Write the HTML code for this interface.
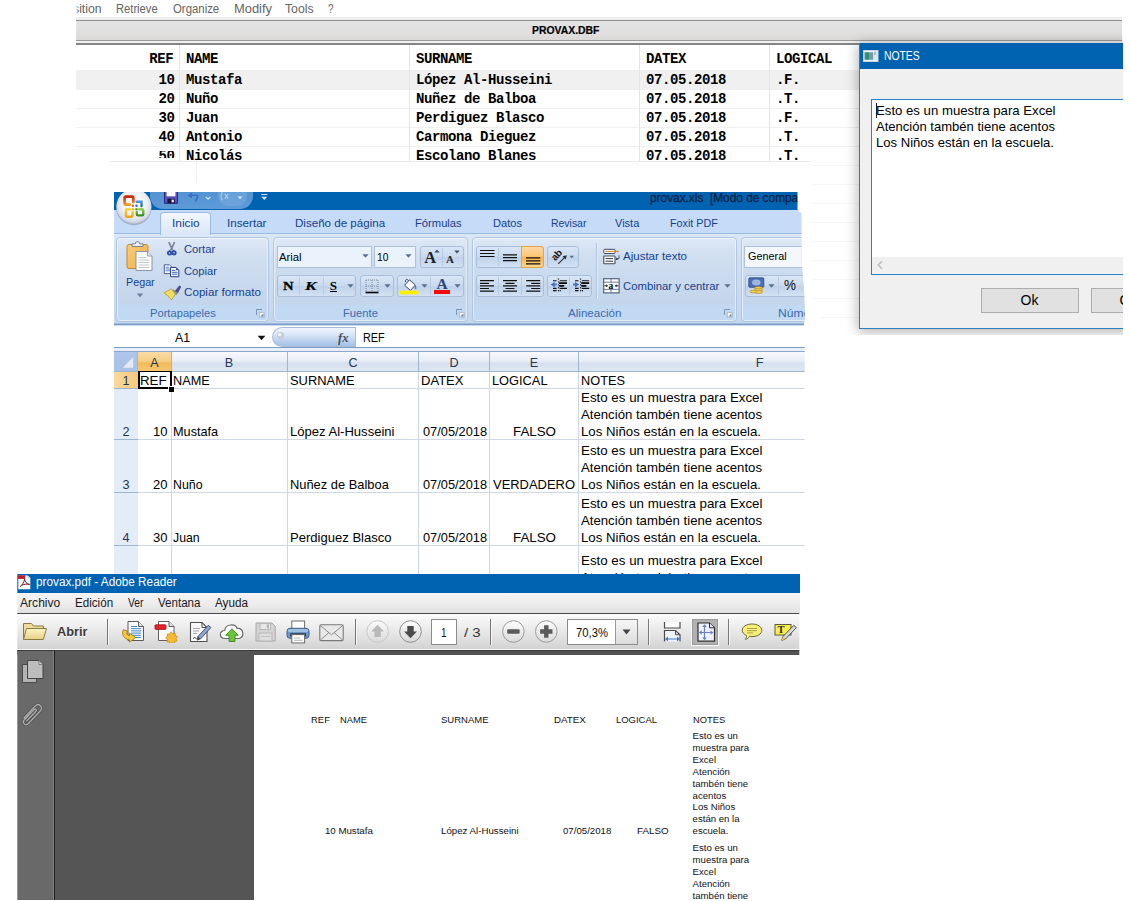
<!DOCTYPE html>
<html lang="es"><head>
<meta charset="utf-8">
<title>provax</title>
<style>
html,body{margin:0;padding:0;background:#fff;}
html{width:1130px;height:901px;overflow:hidden;}
body{position:relative;width:1130px;height:901px;overflow:hidden;font-family:"Liberation Sans",sans-serif;color:#000;}
.a{position:absolute;}
.t{position:absolute;white-space:nowrap;line-height:1;}
.r{text-align:right;}
.c{text-align:center;}
/* DBF browse window */
.mn{font-size:12px;color:#646464;}
.dbf{font-family:"Liberation Mono",monospace;font-weight:bold;font-size:14px;letter-spacing:-0.4px;color:#000;}
.hl{position:absolute;height:1px;}
.vl{position:absolute;width:1px;}
/* Excel */
.rb{font-size:10.900px;color:#15428b;}
.gl{font-size:10.900px;color:#3e6aaa;}
.xl{font-size:13.33px;color:#000;}
.xh{font-size:12.600px;color:#27374f;}
.btn{position:absolute;box-sizing:border-box;border:1px solid #a9bfd9;border-radius:3px;background:linear-gradient(#d9e6f6,#c9daee 50%,#bfd2ea 51%,#d3e1f3);}
.grp{position:absolute;box-sizing:border-box;border:1px solid #b1c6e0;border-radius:4px;background:linear-gradient(#dfe9f6,#d0def0 22%,#c4d6ec 78%,#c4d6ec);box-shadow:inset 0 0 0 1px rgba(255,255,255,.55);}
.grpl{position:absolute;left:1px;right:1px;bottom:1px;height:15px;background:#c2d9f4;border-radius:0 0 3px 3px;}
/* Reader */
.rm{font-size:12px;color:#1a1a1a;}
.pdf{font-size:9.6px;color:#111;}
</style>
</head>
<body>

<!-- ================= DBF BROWSE WINDOW (background app) ================= -->
<div id="dbf">
  <span class="t mn" style="left: 72.9px; transform-origin: left center; transform: scaleX(1.0209); line-height: 1; top: 2.64px;">sition</span>
  <span class="t mn" style="left: 116.3px; transform-origin: left center; transform: scaleX(0.9309); line-height: 1; top: 2.64px;">Retrieve</span>
  <span class="t mn" style="left: 172.7px; transform-origin: left center; transform: scaleX(0.9486); line-height: 1; top: 2.64px;">Organize</span>
  <span class="t mn" style="left: 233.5px; transform-origin: left center; transform: scaleX(1.0752); line-height: 1; top: 2.64px;">Modify</span>
  <span class="t mn" style="left: 285px; transform-origin: left center; transform: scaleX(1.0173); line-height: 1; top: 2.64px;">Tools</span>
  <span class="t mn" style="left: 327.5px; transform-origin: left center; transform: scaleX(0.8224); line-height: 1; top: 2.64px;">?</span>
  <!-- left fade over clipped menu text -->
  <div class="a" style="left:64px;top:0;width:14px;height:18px;background:linear-gradient(90deg,#fff 86%,rgba(255,255,255,0))"></div>

  <!-- caption bar -->
  <div class="a" style="left:76px;top:17px;width:1046px;height:3px;background:#efefef"></div>
  <div class="a" style="left:76px;top:20px;width:1046px;height:1px;background:#8f8f8f"></div>
  <div class="a" style="left:76px;top:21px;width:1046px;height:19px;background:linear-gradient(#e3e3e3,#e0e0e0 60%,#dcd9d8)"></div>
  <div class="a" style="left:76px;top:40px;width:1046px;height:1px;background:#9a9a9a"></div>
  <div class="a" style="left:76px;top:41px;width:1046px;height:2px;background:#f0f0f0"></div>
  <div class="a" style="left:76px;top:43.400px;width:1046px;height:1.400px;background:#858585"></div>
  <span class="t" style="left: 532.2px; font-size: 11.5px; font-weight: bold; color: rgb(0, 0, 0); -webkit-text-stroke: 0.2px rgb(0, 0, 0); transform-origin: left center; transform: scaleX(0.9041); line-height: 1; top: 25.47px;">PROVAX.DBF</span>

  <!-- selected row -->
  <div class="a" style="left:76px;top:70px;width:790px;height:19px;background:#f0f0f0"></div>
  <!-- row separators -->
  <div class="hl" style="left:76px;top:89px;width:790px;background:#f0f0f0"></div>
  <div class="hl" style="left:76px;top:108px;width:790px;background:#f0f0f0"></div>
  <div class="hl" style="left:76px;top:127px;width:790px;background:#f0f0f0"></div>
  <div class="hl" style="left:76px;top:146px;width:790px;background:#f0f0f0"></div>
  <div class="hl" style="left:812px;top:165px;width:50px;background:#f6f6f6"></div>
  <div class="hl" style="left:812px;top:184px;width:50px;background:#f6f6f6"></div>
  <div class="hl" style="left:812px;top:203px;width:50px;background:#f6f6f6"></div>
  <div class="hl" style="left:812px;top:222px;width:50px;background:#f6f6f6"></div>
  <div class="hl" style="left:812px;top:241px;width:50px;background:#f6f6f6"></div>
  <div class="hl" style="left:812px;top:260px;width:50px;background:#f6f6f6"></div>
  <div class="hl" style="left:812px;top:279px;width:50px;background:#f6f6f6"></div>
  <div class="hl" style="left:812px;top:298px;width:50px;background:#f6f6f6"></div>
  <div class="hl" style="left:820px;top:317px;width:42px;background:#f6f6f6"></div>
  <!-- column separators -->
  <div class="vl" style="left:179px;top:45px;height:117px;background:#e5e5e5"></div>
  <div class="vl" style="left:409px;top:45px;height:117px;background:#e5e5e5"></div>
  <div class="vl" style="left:639px;top:45px;height:117px;background:#e5e5e5"></div>
  <div class="vl" style="left:769px;top:45px;height:117px;background:#e5e5e5"></div>

  <!-- header -->
  <span class="t dbf" style="left: 149.3px; line-height: 1; top: 51.57px;">REF</span>
  <span class="t dbf" style="left: 186px; line-height: 1; top: 51.57px;">NAME</span>
  <span class="t dbf" style="left: 416px; line-height: 1; top: 51.57px;">SURNAME</span>
  <span class="t dbf" style="left: 646px; line-height: 1; top: 51.57px;">DATEX</span>
  <span class="t dbf" style="left: 776px; line-height: 1; top: 51.57px;">LOGICAL</span>
  <!-- rows -->
  <span class="t dbf" style="left: 158.5px; line-height: 1; top: 73.27px;">10</span>
  <span class="t dbf" style="left: 186px; line-height: 1; top: 73.27px;">Mustafa</span>
  <span class="t dbf" style="left: 416px; line-height: 1; top: 73.27px;">López Al-Husseini</span>
  <span class="t dbf" style="left: 646px; line-height: 1; top: 73.27px;">07.05.2018</span>
  <span class="t dbf" style="left: 776px; line-height: 1; top: 73.27px;">.F.</span>

  <span class="t dbf" style="left: 158.5px; line-height: 1; top: 92.17px;">20</span>
  <span class="t dbf" style="left: 186px; line-height: 1; top: 92.17px;">Nuño</span>
  <span class="t dbf" style="left: 416px; line-height: 1; top: 92.17px;">Nuñez de Balboa</span>
  <span class="t dbf" style="left: 646px; line-height: 1; top: 92.17px;">07.05.2018</span>
  <span class="t dbf" style="left: 776px; line-height: 1; top: 92.17px;">.T.</span>

  <span class="t dbf" style="left: 158.5px; line-height: 1; top: 111.17px;">30</span>
  <span class="t dbf" style="left: 186px; line-height: 1; top: 111.17px;">Juan</span>
  <span class="t dbf" style="left: 416px; line-height: 1; top: 111.17px;">Perdiguez Blasco</span>
  <span class="t dbf" style="left: 646px; line-height: 1; top: 111.17px;">07.05.2018</span>
  <span class="t dbf" style="left: 776px; line-height: 1; top: 111.17px;">.F.</span>

  <span class="t dbf" style="left: 158.5px; line-height: 1; top: 130.07px;">40</span>
  <span class="t dbf" style="left: 186px; line-height: 1; top: 130.07px;">Antonio</span>
  <span class="t dbf" style="left: 416px; line-height: 1; top: 130.07px;">Carmona Dieguez</span>
  <span class="t dbf" style="left: 646px; line-height: 1; top: 130.07px;">07.05.2018</span>
  <span class="t dbf" style="left: 776px; line-height: 1; top: 130.07px;">.T.</span>

  <span class="t dbf" style="left: 158.5px; line-height: 1; top: 149.07px;">50</span>
  <span class="t dbf" style="left: 186px; line-height: 1; top: 149.07px;">Nicolás</span>
  <span class="t dbf" style="left: 416px; line-height: 1; top: 149.07px;">Escolano Blanes</span>
  <span class="t dbf" style="left: 646px; line-height: 1; top: 149.07px;">07.05.2018</span>
  <span class="t dbf" style="left: 776px; line-height: 1; top: 149.07px;">.T.</span>
  <!-- ragged white overlays that clip the last row -->
  <div class="a" style="left:76px;top:147px;width:103px;height:4.300px;background:#fff"></div>
  <div class="a" style="left:76px;top:157.600px;width:103px;height:8px;background:#fff"></div>
  <div class="a" style="left:76px;top:161.500px;width:735px;height:8px;background:#fff"></div>
  <div class="hl" style="left:110px;top:161px;width:701px;background:#ececec"></div>
  <div class="vl" style="left:196px;top:162px;height:21px;background:#f1f1f1"></div>
</div>

<!-- ================= EXCEL 2007 ================= -->
<div id="xl" class="a" style="left:0;top:0;width:1130px;height:901px;clip-path:polygon(114px 192px,797.5px 192px,797.5px 210.500px,801.500px 213px,801.500px 262px,803.500px 285px,804.700px 302px,804.700px 574px,114px 574px)">
  <!-- title bar -->
  <div class="a" style="left:114px;top:192px;width:690px;height:19px;background:#0063b1"></div>
  <!-- quick access toolbar pill -->
  <div class="a" style="left:150px;top:184px;width:103px;height:24.500px;border-radius:0 0 13px 13px;background:linear-gradient(#4d8fd0,#5e9bd8)"></div>
  <div class="a" style="left:217.500px;top:187px;width:29px;height:19px;border-radius:0 0 10px 10px;background:#72a6dc;opacity:.7"></div>
  <!-- tab row -->
  <div class="a" style="left:114px;top:210px;width:690px;height:24px;background:#c6dbf7"></div>
  <div class="a" style="left:114px;top:233px;width:690px;height:1px;background:#9bbce0"></div>
  <!-- ribbon body -->
  <div class="a" style="left:114px;top:234px;width:690px;height:89px;background:linear-gradient(#dbe7f7,#cfdff3 30%,#c3d7ef)"></div>
  <div class="a" style="left:114px;top:323px;width:690px;height:1px;background:#9db8da"></div>
  <div class="a" style="left:114px;top:324px;width:690px;height:1.500px;background:#7f9dc4"></div>
  <div class="a" style="left:114px;top:325px;width:690px;height:1px;background:#c9dbf0"></div>
  <!-- active tab -->
  <div class="a" style="left:160px;top:212px;width:51px;height:23px;box-sizing:border-box;border:1px solid #9bbce0;border-bottom:none;border-radius:4px 4px 0 0;background:linear-gradient(#f4f8fd,#e3edfa 60%,#dbe7f7)"></div>
  <span class="t rb" style="left: 171.7px; transform-origin: left center; transform: scaleX(1.0889); line-height: 1; top: 217.57px;">Inicio</span>
  <span class="t rb" style="left: 226.8px; transform-origin: left center; transform: scaleX(1.0698); line-height: 1; top: 217.57px;">Insertar</span>
  <span class="t rb" style="left: 295px; transform-origin: left center; transform: scaleX(1.0627); line-height: 1; top: 217.57px;">Diseño de página</span>
  <span class="t rb" style="left: 414.7px; transform-origin: left center; transform: scaleX(1.0288); line-height: 1; top: 217.57px;">Fórmulas</span>
  <span class="t rb" style="left: 492.5px; transform-origin: left center; transform: scaleX(1.0192); line-height: 1; top: 217.57px;">Datos</span>
  <span class="t rb" style="left: 551.4px; transform-origin: left center; transform: scaleX(0.9588); line-height: 1; top: 217.57px;">Revisar</span>
  <span class="t rb" style="left: 615.1px; transform-origin: left center; transform: scaleX(1.0118); line-height: 1; top: 217.57px;">Vista</span>
  <span class="t rb" style="left: 670.3px; transform-origin: left center; transform: scaleX(0.9851); line-height: 1; top: 217.57px;">Foxit PDF</span>
  <span class="t" style="left: 649.5px; font-size: 13px; color: rgb(10, 29, 64); -webkit-text-stroke: 0.25px rgb(10, 29, 64); transform-origin: left center; transform: scaleX(0.9115); line-height: 1; top: 191.2px;">provax.xls &nbsp;[Modo de compat</span>

  <!-- office orb -->
  <svg class="a" style="left:114px;top:188px" width="40" height="40" viewBox="0 0 40 40">
    <defs>
      <radialGradient id="orb" cx="50%" cy="42%" r="60%"><stop offset="0" stop-color="#ffffff"></stop><stop offset=".6" stop-color="#eef1f6"></stop><stop offset=".86" stop-color="#d3dae6"></stop><stop offset="1" stop-color="#a3aec0"></stop></radialGradient>
      <linearGradient id="o1" x1="0" y1="0" x2="0" y2="1"><stop offset="0" stop-color="#c8260f"></stop><stop offset="1" stop-color="#f39a1d"></stop></linearGradient>
      <linearGradient id="o2" x1="0" y1="0" x2="0" y2="1"><stop offset="0" stop-color="#4a9be0"></stop><stop offset="1" stop-color="#2a5fae"></stop></linearGradient>
      <linearGradient id="o3" x1="0" y1="0" x2="0" y2="1"><stop offset="0" stop-color="#fcd535"></stop><stop offset="1" stop-color="#f0a013"></stop></linearGradient>
      <linearGradient id="o4" x1="0" y1="0" x2="0" y2="1"><stop offset="0" stop-color="#98cf45"></stop><stop offset="1" stop-color="#3a8f24"></stop></linearGradient>
    </defs>
    <circle cx="19.900" cy="19.300" r="17.900" fill="#6f7f98" opacity=".5"></circle>
    <circle cx="19.900" cy="18.600" r="17.500" fill="url(#orb)"></circle>
    <path d="M15.800 16.600H11.900a1.300 1.300 0 0 1-1.300-1.300V9.900a1.300 1.300 0 0 1 1.300-1.300h6.100a1.300 1.300 0 0 1 1.300 1.300v4.200" fill="none" stroke="url(#o1)" stroke-width="2.700" stroke-linecap="round"></path>
    <path d="M22.600 13.800h4.900v4.300" fill="none" stroke="url(#o2)" stroke-width="2.400" stroke-linecap="round"></path>
    <circle cx="22.500" cy="17.700" r="1.250" fill="#2f6cbd"></circle>
    <circle cx="18.800" cy="17.700" r="1.250" fill="#e8641b"></circle>
    <path d="M15.800 21.200h-2.700a1.200 1.200 0 0 0-1.200 1.200v5.200a1.200 1.200 0 0 0 1.200 1.200h4.300a1.200 1.200 0 0 0 1.200-1.200V24.200" fill="none" stroke="url(#o3)" stroke-width="2.400" stroke-linecap="round"></path>
    <circle cx="18.800" cy="21.300" r="1.250" fill="#f6bb2c"></circle>
    <path d="M25.300 21.200h2.800a1.200 1.200 0 0 1 1.200 1.200v3.800a1.200 1.200 0 0 1-1.200 1.200h-4.100a1.200 1.200 0 0 1-1.200-1.200v-2.200" fill="none" stroke="url(#o4)" stroke-width="2.400" stroke-linecap="round"></path>
    <circle cx="22.500" cy="21.300" r="1.250" fill="#58a82e"></circle>
  </svg>

  <!-- QAT icons -->
  <svg class="a" style="left:160px;top:190px" width="112" height="20" viewBox="0 0 112 20">
    <path d="M4.500 0h13v13.300h-13z" fill="#5c50c0" stroke="#2c2878" stroke-width="1"></path>
    <rect x="6.600" y="0" width="8.800" height="6.300" fill="#fbfbff"></rect>
    <rect x="7.400" y="8.600" width="7.400" height="4.700" fill="#17153c"></rect><rect x="11.600" y="9.600" width="2.200" height="2.700" fill="#f4f4f4"></rect>
    <path d="M30.500 5.300h5.800c1.600 0 1.600 1 1 2.600l-2 3.800" fill="none" stroke="#3d6bc6" stroke-width="1.600"></path>
    <path d="M27.600 5.400l4.400-2.800v5.600z" fill="#3d6bc6"></path>
    <path d="M45.800 6.800l2.300 2.300 2.300-2.300" fill="none" stroke="#d5e4f5" stroke-width="1.200"></path>
    <path d="M64.800 3.800l3.400 4.800M68.200 3.800l-3.400 4.800" stroke="#a9c8ea" stroke-width="1.300"></path>
    <path d="M62.300 2.400c-1.600 2.400-1.600 5.600 0 8" fill="none" stroke="#a9c8ea" stroke-width="1.200"></path>
    <path d="M77.600 6.400h4.800l-2.400 2.800z" fill="#e4eefa"></path>
    <path d="M101.300 4.500h6" stroke="#d7e6f6" stroke-width="1.200"></path><path d="M101.300 6.800h6l-3 3.200z" fill="#d7e6f6"></path>
  </svg>

  <!-- ===== group: Portapapeles ===== -->
  <div class="grp" style="left:116px;top:236.5px;width:152.5px;height:85px"><div class="grpl"></div></div>
  <!-- paste icon -->
  <svg class="a" style="left:125px;top:240px" width="30" height="33" viewBox="0 0 30 33">
    <defs><linearGradient id="pb" x1="0" y1="0" x2="1" y2="1"><stop offset="0" stop-color="#fbcf7a"></stop><stop offset="1" stop-color="#f2ab45"></stop></linearGradient></defs>
    <rect x="2" y="4.5" width="21" height="24" rx="2" fill="url(#pb)" stroke="#b98a3b" stroke-width="1"></rect>
    <path d="M7 6.5h11v-2.6h-3.2a2.3 2.3 0 0 0-4.6 0H7z" fill="#eef1f5" stroke="#6f7785" stroke-width=".9"></path>
    <path d="M11 11.5h11.5l4.5 4.5v14.5H11z" fill="#fdfdfd" stroke="#8c95a3" stroke-width="1"></path>
    <path d="M22.5 11.5v4.5H27" fill="#e6e9ee" stroke="#8c95a3" stroke-width=".9"></path>
    <path d="M13.5 17.5h8M13.5 20h11M13.5 22.5h11M13.5 25h11M13.5 27.5h11" stroke="#c3c8d0" stroke-width="1"></path>
  </svg>
  <span class="t rb" style="left: 125.5px; transform-origin: left center; transform: scaleX(0.9875); line-height: 1; top: 277.47px;">Pegar</span>
  <svg class="a" style="left:136px;top:293px" width="8" height="5" viewBox="0 0 8 5"><path d="M.8.6h6.4L4 4.2z" fill="#6f7f99"></path></svg>
  <!-- cut -->
  <svg class="a" style="left:164px;top:241px" width="16" height="16" viewBox="0 0 16 16">
    <path d="M4.800 1.200l4 8.200M10.600 1.200L6.600 9.400" stroke="#7d8499" stroke-width="1.700" fill="none"></path>
    <circle cx="5.500" cy="12" r="1.700" fill="none" stroke="#2d4ca6" stroke-width="1.800"></circle>
    <circle cx="10" cy="11.800" r="1.700" fill="none" stroke="#2d4ca6" stroke-width="1.800"></circle>
    <path d="M6.200 9.600L5.400 10.400M9 9.600l.800.700" stroke="#2d4ca6" stroke-width="1.700"></path>
  </svg>
  <span class="t rb" style="left: 183.8px; transform-origin: left center; transform: scaleX(1.0309); line-height: 1; top: 243.77px;">Cortar</span>
  <!-- copy -->
  <svg class="a" style="left:163px;top:264px" width="18" height="14" viewBox="0 0 18 14">
    <path d="M1.300 .800h5.200l2 2v6.800H1.300z" fill="#fdfdff" stroke="#3a4c86" stroke-width=".900"></path>
    <path d="M2.600 3.200h3.400M2.600 5h4.600M2.600 6.800h4.600" stroke="#4a6cc0" stroke-width=".900"></path>
    <path d="M7.600 3.400h5.400l2.800 2.800v6.500H7.600z" fill="#fdfdff" stroke="#263a78" stroke-width="1"></path>
    <path d="M13 3.400v2.800h2.800z" fill="#3556a6"></path>
    <path d="M9 6.400h3.400M9 8.300h5.400M9 10.200h5.400" stroke="#3f63bb" stroke-width="1"></path>
  </svg>
  <span class="t rb" style="left: 183.8px; transform-origin: left center; transform: scaleX(1.0251); line-height: 1; top: 265.77px;">Copiar</span>
  <!-- format painter -->
  <svg class="a" style="left:162px;top:285px" width="20" height="16" viewBox="0 0 20 16">
    <path d="M13 6.400l3.800-5c.900-.900 2.200 0 1.700 1.100l-3 5.600z" fill="#4d4aa0" stroke="#34326e" stroke-width=".600"></path>
    <path d="M11 4.800l4.600 3-1.400 2-4.400-3.200z" fill="#9c9db4" stroke="#5c5d78" stroke-width=".500"></path>
    <path d="M2 7.800l7.600-4 3.600 5.300-3.400 5.500c-1.600-.600-2.600-1.700-3.200-3.200z" fill="#f2dd5c" stroke="#a89428" stroke-width=".700"></path>
    <path d="M2 7.800l4.600 3.600" stroke="#c9b23a" stroke-width=".800"></path>
  </svg>
  <span class="t rb" style="left: 183.8px; transform-origin: left center; transform: scaleX(1.069); line-height: 1; top: 287.47px;">Copiar formato</span>
  <span class="t gl" style="left: 149.5px; transform-origin: left center; transform: scaleX(1.0251); line-height: 1; top: 308.37px;">Portapapeles</span>
  <svg class="a" style="left:255.5px;top:308.5px" width="9" height="9" viewBox="0 0 9 9"><path d="M.5 6V.5H6" fill="none" stroke="#7f93b3" stroke-width="1"></path><path d="M3.4 3.4h4.8v4.8H3.4z" fill="#fff" stroke="#8a9bb6" stroke-width=".6"></path><path d="M4.6 7.4l2.800-2.800v2.800z" fill="#5f7394"></path></svg>

  <!-- ===== group: Fuente ===== -->
  <div class="grp" style="left:272.5px;top:236.5px;width:195.5px;height:85px"><div class="grpl"></div></div>
  <div class="a" style="left:276.5px;top:246px;width:95.5px;height:21.500px;box-sizing:border-box;border:1px solid #abc1de;background:#eaf2fb"></div>
  <div class="a" style="left:373.5px;top:246px;width:42px;height:21.500px;box-sizing:border-box;border:1px solid #abc1de;background:#eaf2fb"></div>
  <span class="t" style="left: 279px; font-size: 10.9px; color: rgb(0, 0, 0); transform-origin: left center; transform: scaleX(1.0368); line-height: 1; top: 251.57px;">Arial</span>
  <span class="t" style="left: 376.5px; font-size: 10.9px; color: rgb(0, 0, 0); transform-origin: left center; transform: scaleX(0.9402); line-height: 1; top: 251.57px;">10</span>
  <svg class="a" style="left:362px;top:254px" width="7" height="4" viewBox="0 0 7 4"><path d="M.4.3h6.200L3.500 3.700z" fill="#5a6f92"></path></svg>
  <svg class="a" style="left:405px;top:254px" width="7" height="4" viewBox="0 0 7 4"><path d="M.4.3h6.200L3.500 3.700z" fill="#5a6f92"></path></svg>
  <div class="btn" style="left:419.5px;top:246px;width:44.5px;height:21.500px"></div>
  <div class="vl" style="left:441.5px;top:247.5px;height:18.5px;background:#b7cbe3"></div>
  <span class="t" style="left: 424.3px; font-family: &quot;Liberation Serif&quot;, serif; font-weight: bold; font-size: 16.5px; color: rgb(34, 34, 34); line-height: 1; top: 249.58px;">A</span>
  <span class="t" style="left: 446px; font-family: &quot;Liberation Serif&quot;, serif; font-weight: bold; font-size: 11px; color: rgb(34, 34, 34); line-height: 1; top: 254.19px;">A</span>
  <svg class="a" style="left:434px;top:249px" width="6" height="4" viewBox="0 0 6 4"><path d="M.3 3.600h5.400L3 .4z" fill="#3d4f6e"></path></svg>
  <svg class="a" style="left:453.500px;top:250px" width="6" height="4" viewBox="0 0 6 4"><path d="M.3.4h5.400L3 3.600z" fill="#3d4f6e"></path></svg>

  <div class="btn" style="left:276.500px;top:275px;width:79px;height:21.500px"></div>
  <div class="vl" style="left:299px;top:276.500px;height:18.500px;background:#b7cbe3"></div>
  <div class="vl" style="left:322.500px;top:276.500px;height:18.500px;background:#b7cbe3"></div>
  <span class="t" style="left: 282.5px; font-family: &quot;Liberation Serif&quot;, serif; font-weight: bold; font-size: 13px; color: rgb(0, 0, 0); -webkit-text-stroke: 0.3px rgb(0, 0, 0); transform-origin: left center; transform: scaleX(1.1181); line-height: 1; top: 279.41px;">N</span>
  <span class="t" style="left: 305px; font-family: &quot;Liberation Serif&quot;, serif; font-weight: bold; font-style: italic; font-size: 13px; color: rgb(0, 0, 0); -webkit-text-stroke: 0.2px rgb(0, 0, 0); transform-origin: left center; transform: scaleX(1.3261); line-height: 1; top: 279.41px;">K</span>
  <span class="t" style="left: 329.7px; font-family: &quot;Liberation Serif&quot;, serif; font-weight: bold; font-size: 13px; color: rgb(0, 0, 0); line-height: 1; top: 279.11px;">S</span>
  <div class="hl" style="left:329.800px;top:290.700px;width:7.400px;background:#000"></div>
  <svg class="a" style="left:346.500px;top:284px" width="7" height="4" viewBox="0 0 7 4"><path d="M.4.3h6.200L3.500 3.700z" fill="#5a6f92"></path></svg>

  <div class="btn" style="left:359.500px;top:275px;width:34px;height:21.500px"></div>
  <svg class="a" style="left:364.500px;top:279px" width="14" height="15" viewBox="0 0 14 15">
    <path d="M1 1h12M1 7h12M1 1v12M7 1v12M13 1v12" stroke="#7b8798" stroke-width="1" stroke-dasharray="1 1"></path>
    <path d="M.5 13.500h13" stroke="#000" stroke-width="1.600"></path>
  </svg>
  <svg class="a" style="left:384px;top:284px" width="7" height="4" viewBox="0 0 7 4"><path d="M.4.3h6.200L3.500 3.700z" fill="#5a6f92"></path></svg>

  <div class="btn" style="left:397px;top:275px;width:67px;height:21.500px"></div>
  <div class="vl" style="left:430px;top:276.500px;height:18.500px;background:#b7cbe3"></div>
  <svg class="a" style="left:400px;top:277.500px" width="20" height="17" viewBox="0 0 20 17">
    <path d="M4.600 7.200l5-5.400 5.800 5.200-5 5.400z" fill="#f6f8fb" stroke="#3c4a66" stroke-width="1"></path>
    <path d="M8.600 2.800c-1.400-2.400-3.600-1.800-3 1.200" fill="none" stroke="#3c4a66" stroke-width="1"></path>
    <path d="M15.200 7.200c1.600 1.600 1.600 3.600.6 4-1 .3-1.600-1.400-.6-4z" fill="#5a78b8"></path>
    <rect x="0" y="12.600" width="18.400" height="3.800" fill="#ffee00"></rect>
  </svg>
  <svg class="a" style="left:421px;top:284px" width="7" height="4" viewBox="0 0 7 4"><path d="M.4.3h6.200L3.500 3.700z" fill="#5a6f92"></path></svg>
  <span class="t" style="left: 436.5px; font-family: &quot;Liberation Serif&quot;, serif; font-weight: bold; font-size: 15.5px; color: rgb(43, 70, 121); line-height: 1; top: 276.32px;">A</span>
  <div class="a" style="left:433.700px;top:290px;width:16.300px;height:3.800px;background:#f40a0a"></div>
  <svg class="a" style="left:454px;top:284px" width="7" height="4" viewBox="0 0 7 4"><path d="M.4.3h6.200L3.500 3.700z" fill="#5a6f92"></path></svg>
  <span class="t gl" style="left: 343.4px; transform-origin: left center; transform: scaleX(1.0323); line-height: 1; top: 308.37px;">Fuente</span>
  <svg class="a" style="left:455.5px;top:308.5px" width="9" height="9" viewBox="0 0 9 9"><path d="M.5 6V.5H6" fill="none" stroke="#7f93b3" stroke-width="1"></path><path d="M3.4 3.4h4.8v4.8H3.4z" fill="#fff" stroke="#8a9bb6" stroke-width=".6"></path><path d="M4.6 7.4l2.800-2.800v2.800z" fill="#5f7394"></path></svg>

  <!-- ===== group: Alineación ===== -->
  <div class="grp" style="left:471.500px;top:236.500px;width:265px;height:85px"><div class="grpl"></div></div>
  <div class="btn" style="left:475.500px;top:246px;width:68px;height:21.500px"></div>
  <div class="a" style="left:521px;top:246px;width:22.500px;height:21.500px;box-sizing:border-box;border:1px solid #e3a54a;border-radius:0 3px 3px 0;background:linear-gradient(#fbd7a0,#fdc877 45%,#fbb24a 55%,#fdd98f)"></div>
  <div class="vl" style="left:498px;top:247.500px;height:18.500px;background:#b7cbe3"></div>
  <svg class="a" style="left:478px;top:248px" width="64" height="18" viewBox="0 0 64 18">
    <path d="M2 2.500h14.500M2 5.500h14.500M2 8.500h14.500" stroke="#111" stroke-width="1.200"></path>
    <path d="M25 6.800h14M25 9.700h14M25 12.600h14" stroke="#111" stroke-width="1.200"></path>
    <path d="M48 9.900h14.300M48 12.900h14.300M48 15.900h14.300" stroke="#111" stroke-width="1.200"></path>
  </svg>
  <div class="btn" style="left:547px;top:246px;width:31.500px;height:21.500px"></div>
  <svg class="a" style="left:548px;top:247px" width="30" height="20" viewBox="0 0 30 20">
    <g transform="translate(7.300 14.300) rotate(-48)"><text x="0" y="0" font-family="Liberation Sans" font-size="9.800" font-weight="bold" fill="#111" letter-spacing="-.3">ab</text></g>
    <path d="M10.200 16.800l7.600-7.400" stroke="#2a2a2a" stroke-width="1.100"></path><path d="M18.800 8.300l-4.200 1 3 3.100z" fill="#2a2a2a"></path>
    <path d="M21.300 8.700h4.800l-2.400 2.600z" fill="#5a6f92"></path>
  </svg>

  <div class="btn" style="left:475.500px;top:275px;width:68px;height:21.500px"></div>
  <div class="vl" style="left:498px;top:276.500px;height:18.500px;background:#b7cbe3"></div>
  <div class="vl" style="left:520.500px;top:276.500px;height:18.500px;background:#b7cbe3"></div>
  <svg class="a" style="left:478px;top:277px" width="64" height="18" viewBox="0 0 64 18">
    <path d="M2 3.700h14M2 6.300h9M2 8.900h14M2 11.500h9M2 14.100h14" stroke="#111" stroke-width="1.200"></path>
    <path d="M25 3.700h14M27.500 6.300h9M25 8.900h14M27.500 11.500h9M25 14.100h14" stroke="#111" stroke-width="1.200"></path>
    <path d="M48.200 3.700h14M53.200 6.300h9M48.200 8.900h14M53.200 11.500h9M48.200 14.100h14" stroke="#111" stroke-width="1.200"></path>
  </svg>
  <div class="btn" style="left:547px;top:275px;width:45px;height:21.500px"></div>
  <div class="vl" style="left:569px;top:276.500px;height:18.500px;background:#b7cbe3"></div>
  <svg class="a" style="left:549px;top:277px" width="44" height="18" viewBox="0 0 44 18">
    <path d="M9.400 1.400v14.600" stroke="#111" stroke-width="1" stroke-dasharray="1.300 1.600"></path>
    <path d="M4 3.700h3.600M10.600 3.700h7.400M4 11.400h3.600M10.600 11.400h7.400M4 13.600h3.600M10.600 13.600h1.200" stroke="#111" stroke-width="1.100"></path>
    <path d="M10 6.100h8M10 8.900h5.200" stroke="#000" stroke-width="1.700"></path>
    <path d="M1.600 7.600l4.200-2.800v1.800h2v2h-2v1.800z" fill="#4f6fbf"></path>
    <path d="M31.600 1.400v14.600" stroke="#111" stroke-width="1" stroke-dasharray="1.300 1.600"></path>
    <path d="M26 3.700h3.600M32.800 3.700h7.400M26 11.400h3.600M32.800 11.400h7.400M26 13.600h3.600M32.800 13.600h1.200" stroke="#111" stroke-width="1.100"></path>
    <path d="M32.200 6.100h8M32.200 8.900h5.200" stroke="#000" stroke-width="1.700"></path>
    <path d="M30.200 7.600l-4.200-2.800v1.800h-2v2h2v1.800z" fill="#4f6fbf"></path>
  </svg>
  <div class="vl" style="left:596px;top:243px;height:55px;background:#aec3de"></div>
  <div class="vl" style="left:597px;top:243px;height:55px;background:#e6eef9"></div>
  <!-- wrap text -->
  <svg class="a" style="left:603px;top:248px" width="18" height="17" viewBox="0 0 18 17">
    <rect x=".800" y="1.300" width="11.200" height="4.200" rx=".800" fill="#fdfdfd" stroke="#3f4a5e" stroke-width="1"></rect>
    <path d="M2.400 3.400h13.800" stroke="#d8862a" stroke-width="1"></path>
    <rect x=".800" y="8" width="11.200" height="7.800" rx=".500" fill="#fdfdfd" stroke="#3f4a5e" stroke-width="1.100"></rect>
    <path d="M2.600 10.600h7.400M2.600 13.200h7.400" stroke="#2c3442" stroke-width="1"></path>
    <path d="M16 7.400v3.200h-2.600" fill="none" stroke="#3a4660" stroke-width=".900"></path><path d="M13 9.200v2.800h2.200z" fill="#3a4660"></path>
  </svg>
  <span class="t rb" style="left: 622.6px; transform-origin: left center; transform: scaleX(1.057); line-height: 1; top: 251.47px;">Ajustar texto</span>
  <!-- merge -->
  <svg class="a" style="left:603px;top:278px" width="17" height="16" viewBox="0 0 17 16">
    <rect x=".700" y=".700" width="15.400" height="14.200" fill="#fdfdfd" stroke="#4a5a78" stroke-width="1.100"></rect>
    <path d="M.700 4.200h15.400M.700 11.400h15.400M8 .700v3.500M8 11.400v3.500" stroke="#5c6d8c" stroke-width=".900"></path>
    <text x="5.600" y="10.500" font-family="Liberation Serif" font-weight="bold" font-size="9.500" fill="#000">a</text>
    <path d="M1.400 7.800h3M12.400 7.800h3" stroke="#222" stroke-width="1"></path><path d="M5 7.800l-1.800-1.500v3zM11.800 7.800l1.800-1.500v3z" fill="#222"></path>
  </svg>
  <span class="t rb" style="left: 622.5px; transform-origin: left center; transform: scaleX(1.0399); line-height: 1; top: 280.57px;">Combinar y centrar</span>
  <svg class="a" style="left:723.500px;top:284px" width="7" height="4" viewBox="0 0 7 4"><path d="M.4.3h6.200L3.500 3.700z" fill="#5a6f92"></path></svg>
  <span class="t gl" style="left: 568.3px; transform-origin: left center; transform: scaleX(1.0643); line-height: 1; top: 308.37px;">Alineación</span>
  <svg class="a" style="left:723.500px;top:308.500px" width="9" height="9" viewBox="0 0 9 9"><path d="M.5 6V.5H6" fill="none" stroke="#7f93b3" stroke-width="1"></path><path d="M3.4 3.4h4.8v4.8H3.4z" fill="#fff" stroke="#8a9bb6" stroke-width=".6"></path><path d="M4.6 7.4l2.800-2.800v2.800z" fill="#5f7394"></path></svg>

  <!-- ===== group: Número ===== -->
  <div class="grp" style="left:740.500px;top:236.500px;width:120px;height:85px"><div class="grpl"></div></div>
  <div class="a" style="left:744px;top:246px;width:100px;height:21.500px;box-sizing:border-box;border:1px solid #abc1de;background:#f4f8fd"></div>
  <span class="t" style="left: 747.7px; font-size: 10.9px; color: rgb(0, 0, 0); transform-origin: left center; transform: scaleX(0.9961); line-height: 1; top: 251.47px;">General</span>
  <div class="btn" style="left:744.500px;top:275px;width:100px;height:21.500px"></div>
  <div class="vl" style="left:777.500px;top:276.500px;height:18.500px;background:#b7cbe3"></div>
  <svg class="a" style="left:748px;top:277px" width="18" height="18" viewBox="0 0 18 18">
    <rect x=".800" y=".800" width="15" height="9.500" rx="1" fill="#4a6fb6" stroke="#2b4680" stroke-width=".800"></rect>
    <ellipse cx="8.300" cy="5.500" rx="4.300" ry="3" fill="#9fb6df"></ellipse>
    <ellipse cx="10.500" cy="11" rx="4" ry="1.500" fill="#f6cf52" stroke="#a8801c" stroke-width=".600"></ellipse>
    <ellipse cx="10.500" cy="13" rx="4" ry="1.500" fill="#f6cf52" stroke="#a8801c" stroke-width=".600"></ellipse>
    <ellipse cx="10.500" cy="15" rx="4" ry="1.500" fill="#f6cf52" stroke="#a8801c" stroke-width=".600"></ellipse>
    <ellipse cx="5.500" cy="14.500" rx="3.500" ry="1.400" fill="#f6cf52" stroke="#a8801c" stroke-width=".600"></ellipse>
  </svg>
  <svg class="a" style="left:768px;top:284px" width="7" height="4" viewBox="0 0 7 4"><path d="M.4.3h6.200L3.500 3.700z" fill="#5a6f92"></path></svg>
  <span class="t" style="left: 783.7px; font-size: 14.5px; color: rgb(17, 17, 17); transform-origin: left center; transform: scaleX(0.9298); line-height: 1; top: 278.33px;">%</span>
  <span class="t gl" style="left: 778.2px; transform-origin: left center; transform: scaleX(1.1101); line-height: 1; top: 308.37px;">Número</span>

  <!-- ===== formula bar ===== -->
  <div class="a" style="left:114px;top:326px;width:700px;height:21px;background:#fff"></div>
  <div class="a" style="left:114px;top:347px;width:700px;height:1px;background:#7c9cc8"></div>
  <div class="a" style="left:114px;top:348px;width:700px;height:3px;background:#e8eff9"></div>
  <div class="a" style="left:114px;top:351px;width:700px;height:1px;background:#8aa8cf"></div>
  <span class="t" style="left: 174.6px; font-size: 13.5px; color: rgb(0, 0, 0); transform-origin: left center; transform: scaleX(0.9082); line-height: 1; top: 330.87px;">A1</span>
  <svg class="a" style="left:257px;top:335px" width="9" height="6" viewBox="0 0 9 6"><path d="M.600.800h7.800L4.500 5.200z" fill="#111"></path></svg>
  <div class="a" style="left:271.500px;top:327px;width:84px;height:20px;border-radius:10px 0 0 10px;box-sizing:border-box;border:1px solid #a9bcd6;border-right:none;background:linear-gradient(#f1f6fd,#d3e1f5 45%,#b4cbeb 80%,#a6c1e7)"></div>
  <svg class="a" style="left:276px;top:331px" width="9" height="9" viewBox="0 0 9 9"><circle cx="4.500" cy="4.500" r="3.600" fill="#c6ccd4"></circle><circle cx="3.600" cy="3.700" r="1.600" fill="#f4f6f8"></circle></svg>
  <span class="t" style="left: 337.5px; font-family: &quot;Liberation Serif&quot;, serif; font-style: italic; font-weight: bold; font-size: 12.5px; color: rgb(74, 79, 90); transform-origin: left center; transform: scaleX(1.0075); line-height: 1; top: 332.03px;">fx</span>
  <div class="vl" style="left:355px;top:327px;height:20px;background:#a9bcd6"></div>
  <span class="t" style="left: 362.8px; font-size: 12.5px; color: rgb(0, 0, 0); transform-origin: left center; transform: scaleX(0.868); line-height: 1; top: 331.82px;">REF</span>

  <!-- ===== grid ===== -->
  <div class="a" style="left:114px;top:352px;width:700px;height:222px;background:#fff"></div>
  <!-- column headers -->
  <div class="a" style="left:114px;top:352px;width:700px;height:19.500px;background:linear-gradient(#f7f9fc,#e8eef7 45%,#d6e0ee 55%,#dfe7f3)"></div>
  <div class="a" style="left:137.500px;top:352px;width:33px;height:19.500px;background:linear-gradient(#f9dba5,#f7cf86 45%,#f2bb59 55%,#f5c878)"></div>
  <div class="a" style="left:114px;top:352px;width:24px;height:19.500px;background:linear-gradient(#aec6ea,#a7c1e6)"></div>
  <svg class="a" style="left:121px;top:356px" width="14" height="13" viewBox="0 0 14 13"><path d="M12.200 1v10.800H1.800z" fill="#e4ebf5"></path></svg>
  <div class="hl" style="left:114px;top:371px;width:700px;background:#9eb6ce"></div>
  <div class="vl" style="left:137px;top:352px;height:222px;background:#9eb6ce"></div>
  <div class="vl" style="left:170.500px;top:352px;height:20px;background:#9eb6ce"></div>
  <div class="vl" style="left:287px;top:352px;height:20px;background:#9eb6ce"></div>
  <div class="vl" style="left:418px;top:352px;height:20px;background:#9eb6ce"></div>
  <div class="vl" style="left:489px;top:352px;height:20px;background:#9eb6ce"></div>
  <div class="vl" style="left:578px;top:352px;height:20px;background:#9eb6ce"></div>
  <span class="t xh c" style="left: 144.5px; width: 20px; line-height: 1; top: 356.93px;">A</span>
  <span class="t xh c" style="left: 219px; width: 20px; line-height: 1; top: 356.93px;">B</span>
  <span class="t xh c" style="left: 343px; width: 20px; line-height: 1; top: 356.93px;">C</span>
  <span class="t xh c" style="left: 444px; width: 20px; line-height: 1; top: 356.93px;">D</span>
  <span class="t xh c" style="left: 524px; width: 20px; line-height: 1; top: 356.93px;">E</span>
  <span class="t xh c" style="left: 749.5px; width: 20px; line-height: 1; top: 356.93px;">F</span>
  <!-- row headers -->
  <div class="a" style="left:114px;top:372px;width:23.500px;height:202px;background:#e4ecf7"></div>
  <div class="a" style="left:114px;top:372px;width:23.500px;height:16.500px;background:linear-gradient(90deg,#f9d9a0,#f6c878)"></div>
  <div class="hl" style="left:114px;top:388px;width:24px;background:#9eb6ce"></div>
  <div class="hl" style="left:114px;top:439px;width:24px;background:#9eb6ce"></div>
  <div class="hl" style="left:114px;top:492px;width:24px;background:#9eb6ce"></div>
  <div class="hl" style="left:114px;top:545px;width:24px;background:#9eb6ce"></div>
  <span class="t xh c" style="left: 116px; width: 20px; line-height: 1; top: 374.63px;">1</span>
  <span class="t xh c" style="left: 116px; width: 20px; line-height: 1; top: 425.83px;">2</span>
  <span class="t xh c" style="left: 116px; width: 20px; line-height: 1; top: 478.83px;">3</span>
  <span class="t xh c" style="left: 116px; width: 20px; line-height: 1; top: 531.93px;">4</span>
  <!-- grid lines -->
  <div class="hl" style="left:138px;top:388px;width:680px;background:#d0d7e5"></div>
  <div class="hl" style="left:138px;top:439px;width:680px;background:#d0d7e5"></div>
  <div class="hl" style="left:138px;top:492px;width:680px;background:#d0d7e5"></div>
  <div class="hl" style="left:138px;top:545px;width:680px;background:#d0d7e5"></div>
  <div class="vl" style="left:170.500px;top:372px;height:202px;background:#d0d7e5"></div>
  <div class="vl" style="left:287px;top:372px;height:202px;background:#d0d7e5"></div>
  <div class="vl" style="left:418px;top:372px;height:202px;background:#d0d7e5"></div>
  <div class="vl" style="left:489px;top:372px;height:202px;background:#d0d7e5"></div>
  <div class="vl" style="left:578px;top:372px;height:202px;background:#d0d7e5"></div>
  <!-- active cell -->
  <div class="a" style="left:137.500px;top:371.300px;width:34.500px;height:18.200px;box-sizing:border-box;border:2px solid #000;border-top-width:1.300px"></div>
  <div class="a" style="left:167.500px;top:385.500px;width:6px;height:6px;background:#000;border:1px solid #fff;border-right:none;border-bottom:none;box-sizing:border-box"></div>
  <!-- row 1 -->
  <span class="t xl" style="left: 139.7px; transform-origin: left center; transform: scaleX(0.9973); line-height: 1; top: 373.92px;">REF</span>
  <span class="t xl" style="left: 173.3px; transform-origin: left center; transform: scaleX(0.9529); line-height: 1; top: 373.92px;">NAME</span>
  <span class="t xl" style="left: 290px; transform-origin: left center; transform: scaleX(0.9677); line-height: 1; top: 373.92px;">SURNAME</span>
  <span class="t xl" style="left: 420.5px; transform-origin: left center; transform: scaleX(0.9781); line-height: 1; top: 373.92px;">DATEX</span>
  <span class="t xl" style="left: 491.5px; transform-origin: left center; transform: scaleX(0.9605); line-height: 1; top: 373.92px;">LOGICAL</span>
  <span class="t xl" style="left: 581px; transform-origin: left center; transform: scaleX(0.9581); line-height: 1; top: 373.92px;">NOTES</span>
  <!-- row 2 -->
  <span class="t xl" style="left: 153px; transform-origin: left center; transform: scaleX(0.9779); line-height: 1; top: 424.92px;">10</span>
  <span class="t xl" style="left: 173.3px; transform-origin: left center; transform: scaleX(0.9531); line-height: 1; top: 424.92px;">Mustafa</span>
  <span class="t xl" style="left: 290.2px; transform-origin: left center; transform: scaleX(0.9795); line-height: 1; top: 424.92px;">López Al-Husseini</span>
  <span class="t xl" style="left: 423px; transform-origin: left center; transform: scaleX(0.9593); line-height: 1; top: 424.92px;">07/05/2018</span>
  <span class="t xl" style="left: 513px; transform-origin: left center; transform: scaleX(1.0007); line-height: 1; top: 424.92px;">FALSO</span>
  <span class="t xl" style="left: 581px; transform-origin: left center; transform: scaleX(1); line-height: 1; top: 390.82px;">Esto es un muestra para Excel</span>
  <span class="t xl" style="left: 581px; transform-origin: left center; transform: scaleX(0.989); line-height: 1; top: 407.92px;">Atención tambén tiene acentos</span>
  <span class="t xl" style="left: 581px; transform-origin: left center; transform: scaleX(0.9916); line-height: 1; top: 424.92px;">Los Niños están en la escuela.</span>
  <!-- row 3 -->
  <span class="t xl" style="left: 153px; transform-origin: left center; transform: scaleX(0.9779); line-height: 1; top: 477.82px;">20</span>
  <span class="t xl" style="left: 173.3px; transform-origin: left center; transform: scaleX(0.9255); line-height: 1; top: 477.82px;">Nuño</span>
  <span class="t xl" style="left: 290.2px; transform-origin: left center; transform: scaleX(0.9661); line-height: 1; top: 477.82px;">Nuñez de Balboa</span>
  <span class="t xl" style="left: 423px; transform-origin: left center; transform: scaleX(0.9593); line-height: 1; top: 477.82px;">07/05/2018</span>
  <span class="t xl" style="left: 493px; transform-origin: left center; transform: scaleX(0.9711); line-height: 1; top: 477.82px;">VERDADERO</span>
  <span class="t xl" style="left: 581px; transform-origin: left center; transform: scaleX(1); line-height: 1; top: 443.92px;">Esto es un muestra para Excel</span>
  <span class="t xl" style="left: 581px; transform-origin: left center; transform: scaleX(0.989); line-height: 1; top: 460.92px;">Atención tambén tiene acentos</span>
  <span class="t xl" style="left: 581px; transform-origin: left center; transform: scaleX(0.9916); line-height: 1; top: 477.82px;">Los Niños están en la escuela.</span>
  <!-- row 4 -->
  <span class="t xl" style="left: 153px; transform-origin: left center; transform: scaleX(0.9779); line-height: 1; top: 531.02px;">30</span>
  <span class="t xl" style="left: 173.3px; transform-origin: left center; transform: scaleX(0.9237); line-height: 1; top: 531.02px;">Juan</span>
  <span class="t xl" style="left: 290.2px; transform-origin: left center; transform: scaleX(0.9794); line-height: 1; top: 531.02px;">Perdiguez Blasco</span>
  <span class="t xl" style="left: 423px; transform-origin: left center; transform: scaleX(0.9593); line-height: 1; top: 531.02px;">07/05/2018</span>
  <span class="t xl" style="left: 513px; transform-origin: left center; transform: scaleX(1.0007); line-height: 1; top: 531.02px;">FALSO</span>
  <span class="t xl" style="left: 581px; transform-origin: left center; transform: scaleX(1); line-height: 1; top: 496.92px;">Esto es un muestra para Excel</span>
  <span class="t xl" style="left: 581px; transform-origin: left center; transform: scaleX(0.989); line-height: 1; top: 514.02px;">Atención tambén tiene acentos</span>
  <span class="t xl" style="left: 581px; transform-origin: left center; transform: scaleX(0.9916); line-height: 1; top: 531.02px;">Los Niños están en la escuela.</span>
  <!-- row 5 (partly hidden) -->
  <span class="t xl" style="left: 581px; transform-origin: left center; transform: scaleX(1); line-height: 1; top: 553.92px;">Esto es un muestra para Excel</span>
  <span class="t xl" style="left: 581px; transform-origin: left center; transform: scaleX(0.989); line-height: 1; top: 570.92px;">Atención tambén tiene acentos</span>

</div>


<!-- ================= ADOBE READER ================= -->
<div id="rd" class="a" style="left:0;top:0;width:1130px;height:901px;clip-path:polygon(17.300px 574px,800px 574px,800px 612px,799.300px 613px,799.300px 655px,800px 655px,800px 901px,17.300px 901px)">
  <div class="a" style="left:17px;top:574px;width:784px;height:327px;background:#fff"></div>
  <!-- title -->
  <div class="a" style="left:17px;top:574px;width:784px;height:19px;background:#0063b1"></div>
  <svg class="a" style="left:18px;top:574.500px" width="13" height="15" viewBox="0 0 13 15">
    <path d="M.300 .400h9.200l2.800 2.600v11.200H.300z" fill="#fdfdfd"></path>
    <path d="M9.500 .400v2.600h2.800z" fill="#cfd8e6"></path>
    <rect x="0" y=".300" width="7.200" height="3.600" fill="#b3202c"></rect>
    <path d="M2 11.700c2.200-1.500 4-4.400 4.600-7.600M6.600 4.100c.2 2.600 2 5 5.200 5.400M3.800 10.200c2.400-1 5-1.300 7.600-.9" fill="none" stroke="#7d1414" stroke-width="1"></path>
  </svg>
  <span class="t" style="left: 36.3px; font-size: 12.5px; color: rgb(255, 255, 255); transform-origin: left center; transform: scaleX(0.9417); line-height: 1; top: 576.42px;">provax.pdf - Adobe Reader</span>
  <!-- menu bar -->
  <div class="a" style="left:17px;top:593px;width:784px;height:20px;background:linear-gradient(#f5f5f5,#ececec 55%,#e2e2e2)"></div>
  <span class="t rm" style="left: 20.4px; transform-origin: left center; transform: scaleX(1.0071); line-height: 1; top: 596.74px;">Archivo</span>
  <span class="t rm" style="left: 75.2px; transform-origin: left center; transform: scaleX(0.968); line-height: 1; top: 596.74px;">Edición</span>
  <span class="t rm" style="left: 128.3px; transform-origin: left center; transform: scaleX(0.8548); line-height: 1; top: 596.74px;">Ver</span>
  <span class="t rm" style="left: 158px; transform-origin: left center; transform: scaleX(0.9649); line-height: 1; top: 596.74px;">Ventana</span>
  <span class="t rm" style="left: 215px; transform-origin: left center; transform: scaleX(0.976); line-height: 1; top: 596.74px;">Ayuda</span>
  <!-- toolbar -->
  <div class="a" style="left:17px;top:612.500px;width:784px;height:1.200px;background:#4a4a4a"></div>
  <div class="a" style="left:17px;top:613.700px;width:784px;height:35.300px;background:linear-gradient(#fbfbfb,#f0f0f0 30%,#dedede 75%,#d2d2d2)"></div>
  <div class="a" style="left:17px;top:649px;width:784px;height:1px;background:#fbfbfb"></div>
  <div class="a" style="left:17px;top:650px;width:784px;height:5px;background:#535353"></div>
  <div class="a" style="left:17px;top:650px;width:784px;height:1px;background:#3a3a3a"></div>
  <!-- open -->
  <svg class="a" style="left:22px;top:620px" width="27" height="22" viewBox="0 0 27 22">
    <defs><linearGradient id="fo" x1="0" y1="0" x2="0" y2="1"><stop offset="0" stop-color="#fdf3c6"></stop><stop offset="1" stop-color="#e9d184"></stop></linearGradient></defs>
    <path d="M1.500 19.500V3.500h8l2 2.500h10v3" fill="#efdc9b" stroke="#8a7a45" stroke-width="1"></path>
    <path d="M1.500 19.500l3-11h20l-3.200 11z" fill="url(#fo)" stroke="#8a7a45" stroke-width="1"></path>
  </svg>
  <span class="t" style="left: 57.3px; font-size: 13.2px; font-weight: bold; color: rgb(58, 58, 58); text-shadow: rgb(255, 255, 255) 0px 1px 0px; transform-origin: left center; transform: scaleX(0.9646); line-height: 1; top: 625.33px;">Abrir</span>
  <div class="vl" style="left:107px;top:619px;height:25.500px;background:#787878"></div>
  <div class="vl" style="left:108px;top:619px;height:25.500px;background:#f6f6f6"></div>
  <!-- convert/export -->
  <svg class="a" style="left:121px;top:620px" width="24" height="23" viewBox="0 0 24 23">
    <path d="M7 1.500h10.500l5 5v14H7z" fill="#fcfcfc" stroke="#5a5a5a" stroke-width="1"></path>
    <path d="M17.500 1.500v5h5" fill="#e4e4e4" stroke="#5a5a5a" stroke-width="1"></path>
    <path d="M10 6.500h6M10 8.700h10M10 10.900h10M10 13.100h10M10 15.300h10M10 17.500h10" stroke="#3b86d6" stroke-width="1"></path>
    <path d="M2.300 9.800C.300 14 2.800 19.200 8.400 19.800V22.200l6.400-4.700-6.400-4.500v2.700C6 15.500 5 13.400 6.200 10.800z" fill="#f7c93f" stroke="#a67c12" stroke-width=".900" stroke-linejoin="round"></path>
  </svg>
  <!-- create pdf -->
  <svg class="a" style="left:154px;top:620px" width="25" height="23" viewBox="0 0 25 23">
    <path d="M4.500 1.500h10.500l5 5v14H4.500z" fill="#fbfbfb" stroke="#5f5f5f" stroke-width="1"></path>
    <path d="M15 1.500v5h5" fill="#e4e4e4" stroke="#5f5f5f" stroke-width="1"></path>
    <rect x="1" y="4.800" width="11" height="4.600" rx=".800" fill="#e5232c" stroke="#a01017" stroke-width=".800"></rect>
    <path d="M17.200 11.800l1.500 1.900 2.400-.5.100 2.400 2.200 1-1.400 2 1.100 2.200-2.300.6-.5 2.400-2.200-1-1.900 1.500-.9-2.300-2.400-.2.500-2.400-1.800-1.600 1.900-1.500-.3-2.400 2.400.1z" fill="#f5b933" stroke="#c58a14" stroke-width=".700"></path>
  </svg>
  <!-- sign -->
  <svg class="a" style="left:189px;top:621px" width="24" height="22" viewBox="0 0 24 22">
    <path d="M1.500 1.500h11.500l5 5v14H1.500z" fill="#fbfbfb" stroke="#4f4f4f" stroke-width="1.100"></path>
    <path d="M13 1.500v5h5" fill="none" stroke="#4f4f4f" stroke-width="1"></path>
    <path d="M4 7.500h7M4 10h6M4 12.500h4" stroke="#a9a9a9" stroke-width="1"></path>
    <path d="M4 17.800c1.500-1.800 2.500-1.800 3.200 0" fill="none" stroke="#333" stroke-width=".900"></path>
    <path d="M19.300 4.300l2.600 2.200-10.200 11.300-3.700 1.300.9-3.600z" fill="#8fa7cf" stroke="#3c4a66" stroke-width=".900"></path>
    <path d="M8.900 15.500l2.800 2.300-3.700 1.300z" fill="#3c4a66"></path>
  </svg>
  <!-- cloud upload -->
  <svg class="a" style="left:219px;top:622px" width="27" height="21" viewBox="0 0 27 21">
    <path d="M6.500 16.500c-7 0-6.500-8 -.800-8 .500-6.500 10.500-7.500 12.500-2 6-.700 8 8 2 10z" fill="#fafafa" stroke="#6a6a6a" stroke-width="1.200"></path>
    <path d="M13 6.800l6.300 6.500h-3.300v6.200h-6v-6.200H6.700z" fill="#6cc43a" stroke="#3b8a1a" stroke-width=".900"></path>
  </svg>
  <!-- save (disabled) -->
  <svg class="a" style="left:254.500px;top:622px" width="21" height="20" viewBox="0 0 21 20">
    <path d="M1 1h16l3.200 3.200V19H1z" fill="#d4d4d4" stroke="#a8a8a8" stroke-width="1"></path>
    <rect x="5" y="1.400" width="10.500" height="6" fill="#e6e6e6" stroke="#b0b0b0" stroke-width=".800"></rect>
    <rect x="11.800" y="2.300" width="2.200" height="4" fill="#b3b3b3"></rect>
    <rect x="4" y="11" width="13" height="8" fill="#dedede" stroke="#b0b0b0" stroke-width=".800"></rect>
    <path d="M6 14.500h9" stroke="#c2c2c2" stroke-width="1"></path>
  </svg>
  <!-- print -->
  <svg class="a" style="left:286px;top:619.500px" width="24" height="24" viewBox="0 0 24 24">
    <rect x="5.800" y="1" width="12.800" height="9" fill="#fdfdfd" stroke="#6b6b6b" stroke-width="1"></rect>
    <rect x="1" y="8.300" width="22" height="10" rx="3" fill="#6a9bcf" stroke="#3f5f85" stroke-width="1"></rect>
    <rect x="1.800" y="9" width="20.400" height="3" rx="1.500" fill="#9fc1e6"></rect>
    <rect x="4.300" y="13.300" width="15.600" height="3.200" fill="#2d2d2d"></rect>
    <rect x="5.800" y="14.600" width="12.800" height="8.300" fill="#fdfdfd" stroke="#6b6b6b" stroke-width="1"></rect>
    <path d="M8 18h6M8 20.300h8.500" stroke="#b5b5b5" stroke-width="1"></path>
  </svg>
  <!-- mail -->
  <svg class="a" style="left:318.500px;top:623.500px" width="25" height="18" viewBox="0 0 25 18">
    <rect x=".800" y=".800" width="23.400" height="15.800" rx="1.200" fill="#e9e9e9" stroke="#7a7a7a" stroke-width="1.100"></rect>
    <path d="M1.300 1.500l11.200 9.300 11.200-9.300M1.300 16l8.700-7.500M23.700 16l-8.700-7.500" fill="none" stroke="#8b8b8b" stroke-width="1"></path>
  </svg>
  <div class="vl" style="left:354.500px;top:619px;height:25.500px;background:#787878"></div>
  <div class="vl" style="left:355.500px;top:619px;height:25.500px;background:#f6f6f6"></div>
  <!-- prev / next -->
  <svg class="a" style="left:365px;top:619px" width="58" height="25" viewBox="0 0 58 25">
    <defs><linearGradient id="cb" x1="0" y1="0" x2="0" y2="1"><stop offset="0" stop-color="#fdfdfd"></stop><stop offset="1" stop-color="#d9d9d9"></stop></linearGradient></defs>
    <circle cx="12.600" cy="12.500" r="10.800" fill="url(#cb)" stroke="#c6c6c6" stroke-width="1"></circle>
    <path d="M12.600 5.800l6.400 6.600h-3.200v5.600h-6.400v-5.600H6.200z" fill="#b9b9b9"></path>
    <circle cx="45.500" cy="12.500" r="10.800" fill="url(#cb)" stroke="#8d8d8d" stroke-width="1"></circle>
    <path d="M45.500 19.200l6.400-6.600h-3.200V7h-6.400v5.600h-3.200z" fill="#4a4a4a"></path>
  </svg>
  <div class="a" style="left:431px;top:619px;width:26px;height:26px;box-sizing:border-box;border:1px solid #8c8c8c;background:#fff"></div>
  <span class="t" style="left: 440.5px; font-size: 13px; color: rgb(17, 17, 17); transform-origin: left center; transform: scaleX(0.7603); line-height: 1; top: 625.7px;">1</span>
  <span class="t" style="left: 464px; font-size: 13px; color: rgb(51, 51, 51); transform-origin: left center; transform: scaleX(1.1542); line-height: 1; top: 625.7px;">/ 3</span>
  <div class="vl" style="left:490px;top:619px;height:25.500px;background:#787878"></div>
  <div class="vl" style="left:491px;top:619px;height:25.500px;background:#f6f6f6"></div>
  <!-- zoom out / in -->
  <svg class="a" style="left:501px;top:619px" width="58" height="25" viewBox="0 0 58 25">
    <circle cx="12.400" cy="12.500" r="10.800" fill="url(#cb)" stroke="#9a9a9a" stroke-width="1"></circle>
    <rect x="6.200" y="10.300" width="12.400" height="4.400" rx="1" fill="#5a5a5a"></rect>
    <circle cx="45.300" cy="12.500" r="10.800" fill="url(#cb)" stroke="#9a9a9a" stroke-width="1"></circle>
    <path d="M43.100 6.300h4.400v4h4v4.400h-4v4h-4.400v-4h-4v-4.400h4z" fill="#5a5a5a"></path>
  </svg>
  <div class="a" style="left:566.500px;top:619px;width:71.500px;height:26px;box-sizing:border-box;border:1px solid #8c8c8c;background:#fff"></div>
  <div class="a" style="left:615px;top:620px;width:22px;height:24px;box-sizing:border-box;border-left:1px solid #9a9a9a;background:linear-gradient(#f6f6f6,#dcdcdc)"></div>
  <span class="t" style="left: 575.5px; font-size: 13px; color: rgb(17, 17, 17); transform-origin: left center; transform: scaleX(0.8678); line-height: 1; top: 625.7px;">70,3%</span>
  <svg class="a" style="left:621.500px;top:629px" width="9" height="6" viewBox="0 0 9 6"><path d="M.500.600h8L4.500 5.400z" fill="#444"></path></svg>
  <div class="vl" style="left:648px;top:619px;height:25.500px;background:#787878"></div>
  <div class="vl" style="left:649px;top:619px;height:25.500px;background:#f6f6f6"></div>
  <!-- fit width -->
  <svg class="a" style="left:663px;top:621px" width="19" height="22" viewBox="0 0 19 22">
    <path d="M1.500 1v6h15.500V1" fill="#fbfbfb" stroke="#4a4a4a" stroke-width="1.200"></path>
    <path d="M1.500 20.500v-11h11l4.500 4.200v6.800" fill="#eef3fb" stroke="#4a4a4a" stroke-width="1.200"></path>
    <path d="M12.500 9.500v4.200h4.500" fill="none" stroke="#4a4a4a" stroke-width="1"></path>
    <path d="M3.500 18h11.500" stroke="#4f74c0" stroke-width="1.200"></path><path d="M2 18l3-2.500v5zM17 18l-3-2.500v5z" fill="#4f74c0"></path>
  </svg>
  <!-- fit page (pressed) -->
  <div class="a" style="left:690.500px;top:618px;width:28.500px;height:28px;box-sizing:border-box;border:1px solid #fafafa;background:#b1b1b1;box-shadow:inset 0 0 0 1px #9a9a9a"></div>
  <svg class="a" style="left:696.500px;top:621.500px" width="19" height="20" viewBox="0 0 19 20">
    <path d="M1 1h11.500l5 4.800v13.400H1z" fill="#eef2fb" stroke="#2f2f2f" stroke-width="1.200"></path>
    <path d="M12.500 1v4.800h5" fill="#dfe5f2" stroke="#2f2f2f" stroke-width="1"></path>
    <path d="M7.500 3.500v13.500M3 10.500h12.500" stroke="#6b80c4" stroke-width="1.200"></path>
    <path d="M7.500 2.200l2.300 2.800h-4.600zM7.500 18.200l2.300-2.800h-4.600zM1.900 10.500l2.800-2.300v4.600zM16.400 10.500l-2.800-2.300v4.600z" fill="#6b80c4"></path>
  </svg>
  <div class="vl" style="left:728px;top:619px;height:25.500px;background:#787878"></div>
  <div class="vl" style="left:729px;top:619px;height:25.500px;background:#f6f6f6"></div>
  <!-- comment -->
  <svg class="a" style="left:741px;top:623px" width="22" height="18" viewBox="0 0 22 18">
    <path d="M11 1c5.600 0 9.800 2.700 9.800 6.300s-4.200 6.300-9.800 6.300c-.900 0-1.700-.100-2.500-.200-1 1.600-2.600 2.700-4.300 2.900 1-1 1.500-2.500 1.300-3.900C2.800 11.300 1.200 9.500 1.200 7.300 1.200 3.700 5.400 1 11 1z" fill="#f8ef7a" stroke="#6d6a3a" stroke-width="1"></path>
    <path d="M6 5.500h10M6 7.700h10M6 9.900h6" stroke="#a9a04a" stroke-width="1"></path>
  </svg>
  <!-- highlight -->
  <svg class="a" style="left:774px;top:623px" width="24" height="19" viewBox="0 0 24 19">
    <rect x="1" y="1.500" width="16" height="10.500" fill="#f8ee4d" stroke="#5d5b36" stroke-width="1"></rect>
    <text x="3.600" y="10.300" font-family="Liberation Serif" font-weight="bold" font-size="10.500" fill="#2a2a2a">T</text>
    <path d="M19.800 2.300l2.600 2.300-11 11.500-3.600 1.200 1-3.600z" fill="#d7d7d7" stroke="#4a4a4a" stroke-width=".900"></path>
    <path d="M8.800 13.700l2.600 2.400-3.600 1.200z" fill="#e9c84a"></path>
  </svg>

  <!-- panels -->
  <div class="a" style="left:17px;top:651px;width:37px;height:249px;background:linear-gradient(90deg,#696969 96%,#8c8c8c)"></div>
  <div class="a" style="left:54px;top:651px;width:1.200px;height:249px;background:#1f1f1f"></div>
  <div class="a" style="left:55px;top:651px;width:198.500px;height:249px;background:#555555"></div>
  <div class="a" style="left:17px;top:899.500px;width:784px;height:1.500px;background:#fff"></div>
  <!-- nav pane icons -->
  <svg class="a" style="left:21px;top:659px" width="24" height="26" viewBox="0 0 24 26">
    <path d="M1.500 5.500h14v18h-14z" fill="#b4b4b4" stroke="#4a4a4a" stroke-width="1"></path>
    <path d="M6.500 1.500h11.500l4 4v14h-15.500z" fill="#bdbdbd" stroke="#444" stroke-width="1"></path>
    <path d="M18 1.500v4h4z" fill="#d6d6d6" stroke="#555" stroke-width=".600"></path>
  </svg>
  <svg class="a" style="left:18.500px;top:701px" width="25" height="27" viewBox="0 0 25 27">
    <path d="M7.800 19.800l9.200-9.600M17 10.200c1.200-1.300-.500-3-1.800-1.700L5.400 18.700c-2.800 3 1 6.800 4 3.800L21.200 10c3.600-3.800-1.300-8.700-5-5L5 17" fill="none" stroke="#3f3f3f" stroke-width="3" stroke-linecap="round" opacity=".55"></path>
    <path d="M7.800 19.800l9.200-9.600M17 10.200c1.200-1.300-.500-3-1.800-1.700L5.400 18.700c-2.800 3 1 6.800 4 3.800L21.200 10c3.600-3.800-1.300-8.700-5-5L5 17" fill="none" stroke="#adadad" stroke-width="1.300" stroke-linecap="round"></path>
  </svg>
  <!-- page text -->
  <span class="t pdf" style="left: 310.7px; transform-origin: left center; transform: scaleX(0.9902); line-height: 1; top: 714.87px;">REF</span>
  <span class="t pdf" style="left: 339.5px; transform-origin: left center; transform: scaleX(0.9741); line-height: 1; top: 714.87px;">NAME</span>
  <span class="t pdf" style="left: 440.7px; transform-origin: left center; transform: scaleX(0.992); line-height: 1; top: 714.87px;">SURNAME</span>
  <span class="t pdf" style="left: 553.8px; transform-origin: left center; transform: scaleX(1.0166); line-height: 1; top: 714.87px;">DATEX</span>
  <span class="t pdf" style="left: 615.9px; transform-origin: left center; transform: scaleX(0.9857); line-height: 1; top: 714.87px;">LOGICAL</span>
  <span class="t pdf" style="left: 692.6px; transform-origin: left center; transform: scaleX(0.9739); line-height: 1; top: 714.87px;">NOTES</span>
  <span class="t pdf" style="left: 325px; transform-origin: left center; transform: scaleX(1.007); line-height: 1; top: 826.47px;">10 Mustafa</span>
  <span class="t pdf" style="left: 440.7px; transform-origin: left center; transform: scaleX(1.0105); line-height: 1; top: 826.47px;">López Al-Husseini</span>
  <span class="t pdf" style="left: 563px; transform-origin: left center; transform: scaleX(1.0059); line-height: 1; top: 826.47px;">07/05/2018</span>
  <span class="t pdf" style="left: 636.6px; transform-origin: left center; transform: scaleX(1.0214); line-height: 1; top: 826.47px;">FALSO</span>
  <span class="t pdf" style="left: 692.6px; line-height: 1; top: 731.47px;">Esto es un</span>
  <span class="t pdf" style="left: 692.6px; line-height: 1; top: 743.37px;">muestra para</span>
  <span class="t pdf" style="left: 692.6px; line-height: 1; top: 755.17px;">Excel</span>
  <span class="t pdf" style="left: 692.6px; line-height: 1; top: 767.07px;">Atención</span>
  <span class="t pdf" style="left: 692.6px; line-height: 1; top: 779.27px;">tambén tiene</span>
  <span class="t pdf" style="left: 692.6px; line-height: 1; top: 790.87px;">acentos</span>
  <span class="t pdf" style="left: 692.6px; line-height: 1; top: 802.27px;">Los Niños</span>
  <span class="t pdf" style="left: 692.6px; line-height: 1; top: 814.27px;">están en la</span>
  <span class="t pdf" style="left: 692.6px; line-height: 1; top: 826.07px;">escuela.</span>
  <span class="t pdf" style="left: 692.6px; line-height: 1; top: 843.07px;">Esto es un</span>
  <span class="t pdf" style="left: 692.6px; line-height: 1; top: 855.27px;">muestra para</span>
  <span class="t pdf" style="left: 692.6px; line-height: 1; top: 867.17px;">Excel</span>
  <span class="t pdf" style="left: 692.6px; line-height: 1; top: 879.37px;">Atención</span>
  <span class="t pdf" style="left: 692.6px; line-height: 1; top: 891.37px;">tambén tiene</span>
</div>


<!-- ================= NOTES DIALOG ================= -->
<div id="dlg" class="a" style="left:0;top:0;width:1122.500px;height:335px;overflow:hidden;pointer-events:none">
  <div class="a" style="left:859px;top:43px;width:300px;height:286px;box-sizing:border-box;border:1px solid #2b7fc4;background:#f0f0f0;box-shadow:0 2px 12px 1px rgba(0,0,0,.30)"></div>
  <div class="a" style="left:860px;top:43px;width:300px;height:25.5px;background:#0063b1"></div>
  <!-- caption icon -->
  <svg class="a" style="left:863px;top:50px" width="16" height="12" viewBox="0 0 16 12">
    <rect x="0.5" y="0.5" width="14.5" height="11" fill="#f4f6f8" stroke="#c9d3dc" stroke-width="1"></rect>
    <rect x="1.6" y="2.2" width="5.2" height="7.6" fill="#3a8a78"></rect>
    <rect x="6.8" y="2.2" width="3.6" height="7.6" fill="#6f9fa8"></rect>
    <rect x="10.4" y="2.2" width="3.6" height="7.6" fill="#dfe6ec"></rect>
    <rect x="11.4" y="1.6" width="1.2" height="3.2" fill="#8a98a8"></rect>
  </svg>
  <span class="t" style="left: 884.4px; font-size: 12.5px; color: rgb(255, 255, 255); transform-origin: left center; transform: scaleX(0.8267); line-height: 1; top: 50.42px;">NOTES</span>
  <!-- edit box -->
  <div class="a" style="left:870.5px;top:99px;width:300px;height:175.5px;box-sizing:border-box;border:1px solid #2a80c8;background:#fff"></div>
  <div class="a" style="left:872px;top:257px;width:300px;height:16.5px;background:#f0f0f0"></div>
  <svg class="a" style="left:876px;top:260px" width="8" height="10" viewBox="0 0 8 10"><path d="M6 1.2 L2.2 5 L6 8.8" fill="none" stroke="#bdbdbd" stroke-width="1.5"></path></svg>
  <div class="a" style="left:875.700px;top:103px;width:1.300px;height:14.500px;background:#16163a"></div>
  <span class="t xl" style="left: 875.8px; transform-origin: left center; transform: scaleX(0.989); line-height: 1; top: 103.72px;">Esto es un muestra para Excel</span>
  <span class="t xl" style="left: 875.8px; transform-origin: left center; transform: scaleX(0.9781); line-height: 1; top: 119.72px;">Atención tambén tiene acentos</span>
  <span class="t xl" style="left: 875.8px; transform-origin: left center; transform: scaleX(0.9805); line-height: 1; top: 135.72px;">Los Niños están en la escuela.</span>
  <!-- buttons -->
  <div class="a" style="left:981px;top:287.5px;width:97.5px;height:25px;box-sizing:border-box;border:1px solid #adadad;background:#e1e1e1"></div>
  <span class="t" style="left: 1020.5px; font-size: 14px; color: rgb(0, 0, 0); line-height: 1; top: 293.35px;">Ok</span>
  <div class="a" style="left:1091px;top:287.5px;width:97.5px;height:25px;box-sizing:border-box;border:1px solid #adadad;background:#e1e1e1"></div>
  <span class="t" style="left: 1119.4px; font-size: 14px; color: rgb(0, 0, 0); line-height: 1; top: 293.35px;">Cancel</span>
</div>




</body></html>
